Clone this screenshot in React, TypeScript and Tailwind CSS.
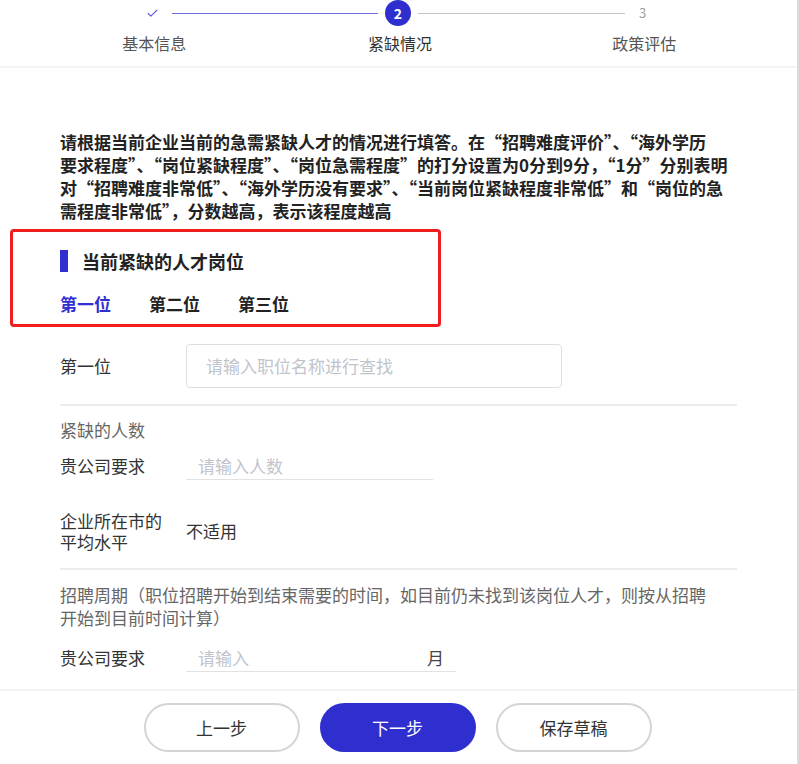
import { Check } from 'lucide-react'

const font = { fontFamily: '"Noto Sans CJK SC", "Noto Sans", sans-serif' }

export default function App() {
  return (
    <div
      className="flex h-[764px] w-[799px] flex-col overflow-hidden border-r-2 border-[#dcdcdc] bg-white text-[#333]"
      style={font}
    >
      {/* 步骤条 */}
      <div className="h-[68px] shrink-0 border-b-2 border-[#f4f4f6]">
        <div className="flex h-[26px] items-center pl-[146px]">
          <Check className="h-[13px] w-[13px] text-[#5a5ad8]" strokeWidth={2} />
          <div className="ml-[13px] h-px w-[206px] bg-[#6b6bdc]" />
          <div className="ml-[7px] flex h-[26px] w-[26px] items-center justify-center rounded-full bg-[#2f2fd0] text-[14px] font-bold text-white">
            2
          </div>
          <div className="ml-[7px] h-px w-[207px] bg-[#c4c4c4]" />
          <span className="ml-[14px] text-[13px] text-[#a0a0a0]">3</span>
        </div>
        <div className="mt-[5px] grid grid-cols-3 px-[32px] text-[16px] leading-[24px]">
          <span className="text-center text-[#555]">基本信息</span>
          <span className="pl-[3px] text-center text-[#333]">紧缺情况</span>
          <span className="pl-[3px] text-center text-[#555]">政策评估</span>
        </div>
      </div>

      {/* 主体 */}
      <div className="flex-1 overflow-hidden">
        <p className="mx-[60px] mt-[62px] whitespace-nowrap text-[17px] font-bold leading-[23px] text-[#222]">
          请根据当前企业当前的急需紧缺人才的情况进行填答。在“招聘难度评价”、“海外学历
          <br />
          要求程度”、“岗位紧缺程度”、“岗位急需程度”的打分设置为0分到9分，“1分”分别表明
          <br />
          对“招聘难度非常低”、“海外学历没有要求”、“当前岗位紧缺程度非常低”和“岗位的急
          <br />
          需程度非常低”，分数越高，表示该程度越高
        </p>

        <div className="ml-[10px] mt-[7px] h-[98px] w-[431px] rounded-[4px] border-[3px] border-[#f01e1e] pl-[47px] pt-[16px]">
          <div className="flex items-center">
            <div className="h-[22px] w-[8px] bg-[#2f2fd0]" />
            <span className="ml-[14px] text-[18px] font-bold leading-[26px] text-[#222]">当前紧缺的人才岗位</span>
          </div>
          <div className="mt-[18px] flex gap-[38px] text-[17px] font-bold leading-[24px]">
            <span className="text-[#3030d0]">第一位</span>
            <span className="text-[#222]">第二位</span>
            <span className="text-[#222]">第三位</span>
          </div>
        </div>

        <div className="mx-[60px] text-[17px]">
          <div className="mt-[17px] flex items-center">
            <span className="w-[126px]">第一位</span>
            <div className="flex h-[44px] w-[376px] items-center rounded-[4px] border border-[#dcdfe6] px-[19px] text-[#c0c4cc]">
              请输入职位名称进行查找
            </div>
          </div>
          <div className="mt-[16px] h-[2px] bg-[#ececec]" />

          <div className="mt-[12px] leading-[24px] text-[#666]">紧缺的人数</div>
          <div className="mt-[10px] flex items-center">
            <span className="w-[126px]">贵公司要求</span>
            <div className="h-[28px] w-[247px] border-b border-[#e2e2e2] pl-[12px] leading-[28px] text-[#c0c4cc]">
              请输入人数
            </div>
          </div>

          <div className="mt-[30px] flex items-center">
            <div className="w-[126px] leading-[21px]">
              <div>企业所在市的</div>
              <div>平均水平</div>
            </div>
            <span>不适用</span>
          </div>
          <div className="mt-[16px] h-[2px] bg-[#ececec]" />

          <div className="mt-[13px] whitespace-nowrap leading-[23px] text-[#666]">
            招聘周期（职位招聘开始到结束需要的时间，如目前仍未找到该岗位人才，则按从招聘
            <br />
            开始到目前时间计算）
          </div>
          <div className="mt-[15px] flex items-center">
            <span className="w-[126px]">贵公司要求</span>
            <div className="flex h-[28px] w-[270px] items-center justify-between border-b border-[#e2e2e2] pl-[12px] pr-[12px] leading-[28px]">
              <span className="text-[#c0c4cc]">请输入</span>
              <span className="text-[#444]">月</span>
            </div>
          </div>
        </div>
      </div>

      {/* 底部按钮 */}
      <div className="flex h-[75px] shrink-0 items-center justify-center gap-[20px] border-t-2 border-[#f4f4f6] text-[17px]">
        <button className="ml-[-2px] h-[49px] w-[156px] rounded-full border-2 border-[#d4d4d4] bg-white text-[#333]">
          上一步
        </button>
        <button className="h-[49px] w-[156px] rounded-full bg-[#2f2fd0] text-white">下一步</button>
        <button className="h-[49px] w-[156px] rounded-full border-2 border-[#d4d4d4] bg-white text-[#333]">
          保存草稿
        </button>
      </div>
    </div>
  )
}
